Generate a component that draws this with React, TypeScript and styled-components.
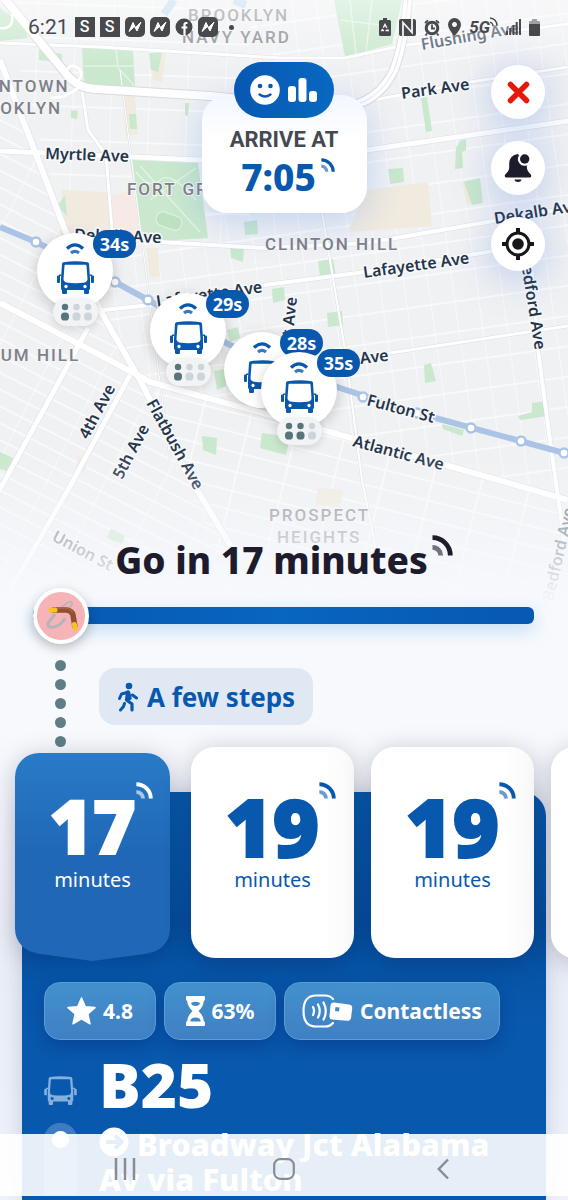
import React from "react";
import styled, { createGlobalStyle, css } from "styled-components";

const blue = "#0858ae";
const ink = "#1d1b2c";
const sans = `"Noto Sans", "Open Sans", sans-serif`;

const GlobalStyle = createGlobalStyle`
  *, *::before, *::after { box-sizing: border-box; }
  body { margin: 0; background: #f7f9fd; font-family: ${sans}; color: ${ink}; }
  button { font: inherit; color: inherit; border: 0; padding: 0; margin: 0; background: none; cursor: pointer; }
  h1, h2, p { margin: 0; }
  svg { display: block; flex: none; }
`;

/* ---------- layout ---------- */

const Page = styled.div`
  display: grid;
  grid-template-columns: minmax(0, 1fr);
  min-height: 100vh;
  overflow: hidden;
  background: linear-gradient(#f7f9fd 0 730px, #e9edf7 960px, #eef2fa);
`;

const MapCanvas = styled.div`
  grid-area: 1 / 1;
  position: relative;
  height: 620px;
`;

const MapDrawing = styled.svg`
  width: 100%;
  height: 100%;
`;

const Content = styled.div`
  grid-area: 1 / 1;
  position: relative;
  display: flex;
  flex-direction: column;
  pointer-events: none;
  & button { pointer-events: auto; }
`;

const Top = styled.div`
  min-height: 530px;
`;

const StatusBar = styled.div`
  display: flex;
  justify-content: space-between;
  align-items: center;
  height: 54px;
  padding: 0 28px;
  color: #47494c;
`;

const StatusGroup = styled.div<{ $gap: number }>`
  display: flex;
  align-items: center;
  gap: ${(p) => p.$gap}px;
`;

const Clock = styled.span`
  font: 400 21px/24px Roboto, sans-serif;
  margin-right: 1px;
`;

const AppTile = styled.span`
  display: grid;
  place-items: center;
  width: 20px;
  height: 20px;
  background: #47494c;
  color: #fff;
  font: 500 16px/20px Roboto, sans-serif;
`;

const MoreDot = styled.span`
  width: 5px;
  height: 5px;
  margin-left: 6px;
  border-radius: 50%;
  background: #47494c;
`;

const Network = styled.span`
  display: flex;
  font: italic 700 17px/20px Roboto, sans-serif;
`;

const Header = styled.header`
  display: grid;
  grid-template-columns: 1fr auto 1fr;
  align-items: start;
  padding: 8px 23px 0;
`;

const ArriveBox = styled.div`
  grid-column: 2;
  display: flex;
  flex-direction: column;
  align-items: center;
`;

const MoodButton = styled.button`
  position: relative;
  z-index: 1;
  display: flex;
  align-items: center;
  justify-content: center;
  gap: 8px;
  width: 100px;
  height: 56px;
  border-radius: 28px;
  background: linear-gradient(90deg, #0758b2, #0868c0);
`;

const ArriveCard = styled.div`
  width: 165px;
  height: 118px;
  margin-top: -23px;
  padding-top: 30px;
  border-radius: 26px;
  text-align: center;
  background: linear-gradient(#f2f7ff, #fff 40%);
  box-shadow: 0 8px 36px rgba(70, 130, 230, 0.28);
`;

const ArriveLabel = styled.p`
  font: 700 22px/30px Roboto, sans-serif;
  color: #454951;
`;

const ArriveTime = styled.p`
  display: flex;
  justify-content: center;
  gap: 5px;
  padding-left: 8px;
  font-size: 37px;
  font-weight: 800;
  line-height: 44px;
  color: ${blue};
  & svg { margin-top: 3px; }
`;

const Actions = styled.div`
  display: flex;
  flex-direction: column;
  align-items: flex-end;
  gap: 22px;
  padding-top: 3px;
`;

const RoundButton = styled.button`
  display: grid;
  place-items: center;
  width: 54px;
  height: 54px;
  border-radius: 50%;
  background: #fff;
  box-shadow: 0 6px 40px rgba(70, 120, 220, 0.38);
`;

/* ---------- bus pins ---------- */

const Pin = styled.button`
  position: absolute;
  display: flex;
  flex-direction: column;
  align-items: center;
  width: 76px;
  height: 76px;
  padding-top: 10px;
  transform: translate(-50%, -50%);
  border-radius: 50%;
  background: #fff;
  box-shadow: 0 3px 14px rgba(0, 0, 0, 0.2);
  color: ${blue};
  gap: 6px;
`;

const PinTime = styled.span`
  position: absolute;
  left: 56px;
  top: -3px;
  min-width: 43px;
  height: 28px;
  border-radius: 14px;
  background: ${blue};
  color: #fff;
  font-size: 18px;
  font-weight: 700;
  line-height: 28px;
  text-align: center;
`;

const Occupancy = styled.span`
  position: absolute;
  left: 16px;
  top: 65px;
  display: grid;
  place-items: center;
  width: 45px;
  height: 28px;
  border-radius: 14px;
  background: #f1f3f5;
  box-shadow: 0 3px 8px rgba(0, 0, 0, 0.12);
`;

/* ---------- trip ---------- */

const Title = styled.h1`
  display: flex;
  justify-content: center;
  gap: 4px;
  font-size: 37px;
  font-weight: 800;
  line-height: 60px;
  white-space: nowrap;
  & svg { margin-top: 5px; }
`;

const Progress = styled.div`
  display: flex;
  align-items: center;
  height: 17px;
  margin: 17px 34px 0 33px;
  border-radius: 6px;
  background: linear-gradient(90deg, #0758b0, #0865c0 50%, #0758b0);
  box-shadow: 0 6px 18px rgba(90, 170, 230, 0.35);
`;

const Avatar = styled.span`
  display: grid;
  place-items: center;
  width: 56px;
  height: 56px;
  border: 4px solid #fff;
  border-radius: 50%;
  background: #f6b3b8;
  box-shadow: 0 4px 12px rgba(0, 0, 0, 0.25);
`;

const WalkRow = styled.div`
  display: flex;
  gap: 33px;
  padding: 36px 55px 0;
`;

const Dots = styled.div`
  display: flex;
  flex-direction: column;
  gap: 8px;
`;

const Dot = styled.span`
  width: 11px;
  height: 11px;
  border-radius: 50%;
  background: #607d85;
`;

const WalkChip = styled.div`
  display: flex;
  align-items: center;
  gap: 8px;
  height: 57px;
  margin-top: 8px;
  padding: 0 18px;
  border-radius: 16px;
  background: #e0e9f3;
  color: ${blue};
  font-size: 26px;
  font-weight: 700;
  white-space: nowrap;
`;

const Departures = styled.div`
  position: relative;
  z-index: 1;
  display: flex;
  align-items: flex-start;
  gap: 17px;
  padding-left: 15px;
`;

const Departure = styled.button<{ $active?: boolean }>`
  position: relative;
  flex: none;
  display: flex;
  flex-direction: column;
  align-items: center;
  width: 163px;
  height: 211px;
  padding-top: 43px;
  border-radius: 24px;
  color: ${blue};
  background: linear-gradient(90deg, #fff 80%, #f9f9fa);
  box-shadow: 0 4px 26px rgba(0, 10, 40, 0.22);
  ${(p) =>
    p.$active &&
    css`
      width: 155px;
      height: 200px;
      margin: 6px 4px 0 0;
      padding-top: 37px;
      color: #fff;
      background: linear-gradient(#297bc7, #2068b7 50%);
      &::after {
        content: "";
        position: absolute;
        left: 18px;
        right: 18px;
        top: 100%;
        height: 8px;
        background: #2068b7;
        clip-path: polygon(0 0, 100% 0, 50% 100%);
      }
    `}
`;

const Minutes = styled.span<{ $active?: boolean }>`
  position: relative;
  font-size: ${(p) => (p.$active ? 74 : 80)}px;
  font-weight: 900;
  line-height: 72px;
  -webkit-text-stroke: 2px currentColor;
  & svg {
    position: absolute;
    left: 100%;
    top: -8px;
  }
`;

const Unit = styled.span`
  font-size: 20px;
  line-height: 36px;
`;

const Panel = styled.section`
  flex: 1;
  margin: -166px 22px 0;
  padding: 190px 22px 0;
  border-radius: 24px 24px 0 0;
  background: linear-gradient(#085aac, #06509f 130px, #0858ae 230px);
  box-shadow: 0 0 20px rgba(40, 60, 100, 0.2);
  color: #fff;
`;

const Chips = styled.div`
  display: flex;
  gap: 8px;
`;

const Chip = styled.button`
  display: flex;
  align-items: center;
  justify-content: center;
  gap: 7px;
  min-width: 112px;
  height: 58px;
  padding: 0 17px;
  border: 1px solid #5c9dd5;
  border-radius: 16px;
  background: linear-gradient(#4390cd, #3f80c4);
  box-shadow: 0 6px 16px rgba(0, 20, 80, 0.25);
  color: #fff;
  font-size: 21px;
  font-weight: 700;
`;

const LineRow = styled.div`
  display: grid;
  grid-template-columns: 33px 1fr;
  column-gap: 22px;
  align-items: center;
`;

const LineIcon = styled.span`
  padding-top: 18px;
  color: #85afdd;
`;

const LineName = styled.h2`
  font-size: 62px;
  font-weight: 900;
  line-height: 78px;
  padding-top: 5px;
`;

const StopRow = styled(LineRow)`
  align-items: start;
`;

const Track = styled.span`
  height: 72px;
  padding: 8px;
  border-radius: 16px 16px 0 0;
  background: rgba(255, 255, 255, 0.22);
`;

const TrackDot = styled.span`
  display: block;
  width: 17px;
  height: 17px;
  border-radius: 50%;
  background: #fff;
`;

const Headsign = styled.p`
  display: flex;
  gap: 8px;
  padding-top: 4px;
  font-size: 31px;
  font-weight: 800;
  line-height: 35px;
`;

const HeadsignText = styled.span`
  text-indent: 38px;
  margin-left: -38px;
  max-width: 420px;
`;

const SystemNav = styled.nav`
  position: fixed;
  z-index: 3;
  left: 0;
  right: 0;
  bottom: 4px;
  display: grid;
  grid-template-columns: repeat(3, 28%);
  justify-content: center;
  height: 62px;
  background: rgba(255, 255, 255, 0.9);
  color: #878d93;
`;

const NavButton = styled.button`
  display: grid;
  place-items: center;
  padding-top: 8px;
`;

/* ---------- icons ---------- */

const Bus = ({ size = 37 }: { size?: number }) => (
  <svg width={size} height={Math.round((size * 33) / 37)} viewBox="0 0 37 33" fill="currentColor" aria-hidden>
    <path
      fillRule="evenodd"
      d="M6.500 1.200Q18.500-.8 30.500 1.200Q31.800 1.500 32 2.800L33 18V27.500Q33 29 31.500 29H5.500Q4 29 4 27.500V18L5 2.800Q5.200 1.500 6.500 1.200ZM8.500 3.800Q7.600 3.900 7.500 4.800L6.500 18Q6.400 21 9 21.500Q18.500 23 28 21.500Q30.600 21 30.500 18L29.500 4.800Q29.400 3.900 28.500 3.800ZM9 23.800a1.700 1.700 0 1 0 .01 0ZM28 23.800a1.700 1.700 0 1 0 .01 0Z"
    />
    <rect x="5" y="28" width="5" height="5" rx="1.200" />
    <rect x="27" y="28" width="5" height="5" rx="1.200" />
    <path d="M4.500 13.500H2V14.500H1Q0 14.500 0 15.500V21Q0 22 1 22H2Q3 22 3 21V15H4.500ZM32.500 13.500H35V14.500H36Q37 14.500 37 15.500V21Q37 22 36 22H35Q34 22 34 21V15H32.500Z" />
  </svg>
);

const Live = ({ size }: { size: number }) => (
  <svg width={size} height={size} viewBox="0 0 21 21" fill="none" stroke="currentColor" strokeWidth="4.800" aria-hidden>
    <path d="M.5 2.700A17.800 17.800 0 0 1 18.300 20.500" />
    <path d="M.5 12.300A8.200 8.200 0 0 1 8.700 20.500" opacity=".6" />
  </svg>
);

const PinSignal = () => (
  <svg width="18" height="12" viewBox="0 0 18 12" fill="none" stroke="currentColor" strokeWidth="3.200" aria-hidden>
    <path d="M1 5.500Q9-1.800 17 5.500" />
    <path d="M5 10Q9 6.600 13 10" opacity=".8" />
  </svg>
);

const People = ({ full }: { full: number }) => (
  <svg width="32" height="19" viewBox="0 0 32 19" aria-hidden>
    {[0, 1, 2].map((i) => (
      <g key={i} fill={i < full ? "#58757c" : "#ccd5da"}>
        <circle cx={5 + i * 11.500} cy="4" r="3.200" />
        <rect x={1 + i * 11.500} y="9.500" width="8" height="8" rx="3.600" />
      </g>
    ))}
  </svg>
);

const Smile = () => (
  <svg width="30" height="30" viewBox="0 0 30 30" aria-hidden>
    <circle cx="15" cy="15" r="14.800" fill="#fff" />
    <circle cx="10" cy="11" r="2.300" fill={blue} />
    <circle cx="20.500" cy="11" r="2.300" fill={blue} />
    <path d="M9.500 19.500Q15 23.500 20.500 19.500" fill="none" stroke={blue} strokeWidth="2.400" strokeLinecap="round" />
  </svg>
);

const Bars = () => (
  <svg width="30" height="24" viewBox="0 0 30 24" fill="#fff" aria-hidden>
    <rect x="0" y="8" width="8" height="16" rx="3" />
    <rect x="10.500" y="0" width="8" height="24" rx="3" />
    <rect x="21" y="13" width="8" height="11" rx="3" />
  </svg>
);

const Cross = () => (
  <svg width="23" height="23" viewBox="0 0 23 23" stroke="#e5190b" strokeWidth="5.500" strokeLinecap="round" aria-hidden>
    <path d="M3.500 3.500L19.500 19.500M19.500 3.500L3.500 19.500" />
  </svg>
);

const Bell = () => (
  <svg width="28" height="30" viewBox="0 0 28 30" fill="#1b1d2a" aria-hidden>
    <path d="M14 1Q5.500 2 5.200 10.500V15Q5 18 1.200 21.500Q0 24 2 24.500H26Q28 24 26.800 21.500Q23 18 22.800 14L22.800 12.300A6.600 6.600 0 0 1 15 2.500Z" />
    <circle cx="20.700" cy="6" r="4.700" />
    <path d="M10.500 26.500H17.500Q17 29 14 29Q11 29 10.500 26.500Z" />
  </svg>
);

const Locate = () => (
  <svg width="34" height="34" viewBox="0 0 34 34" fill="none" stroke="#15171c" aria-hidden>
    <circle cx="17" cy="17" r="11" strokeWidth="3" />
    <path d="M17 1V7M17 27V33M1 17H7M27 17H33" strokeWidth="4" />
    <circle cx="17" cy="17" r="5.800" fill="#15171c" stroke="none" />
  </svg>
);

const Boomerang = () => (
  <svg width="40" height="40" viewBox="0 0 40 40" fill="none" aria-hidden>
    <path d="M20 12Q30 3 31 7Q31 10 28 12" stroke="#b3b4ba" strokeWidth="2" opacity=".8" />
    <path d="M14 18L7 27Q6 32 13 31Q21 29 24 22" stroke="#a5b6ba" strokeWidth="3" opacity=".85" />
    <path d="M11 14H26Q31 15 32 19L34 31" stroke="#8f4f33" strokeWidth="5.500" />
    <path d="M14 12.500H26Q30 13 31.500 17" stroke="#a9603f" strokeWidth="1.500" />
    <path d="M10 14H14M33.400 28.500L34.200 32" stroke="#fcc21b" strokeWidth="5" strokeLinecap="round" />
  </svg>
);

const Walker = () => (
  <svg width="22" height="30" viewBox="0 0 22 30" fill="none" stroke="currentColor" strokeLinecap="round" strokeLinejoin="round" aria-hidden>
    <circle cx="12" cy="4" r="3.300" fill="currentColor" stroke="none" />
    <path d="M10.500 10.500L9.500 18L15 22V28" strokeWidth="3.200" />
    <path d="M11 10.500L12.500 16" strokeWidth="4.500" />
    <path d="M10 10.500L4.500 12L2.500 16.500M15.500 13L19.500 16M7.500 21.500L6.500 24.500L3.500 28" strokeWidth="3" />
  </svg>
);

const Star = () => (
  <svg width="29" height="28" viewBox="0 0 29 28" fill="#fff" stroke="#fff" strokeWidth="1.500" strokeLinejoin="round" aria-hidden>
    <path d="M14.500 1L18.400 9.700L28 10.600L20.800 17L23 26.800L14.500 21.800L6 26.800L8.200 17L1 10.600L10.600 9.700Z" />
  </svg>
);

const Hourglass = () => (
  <svg width="19" height="30" viewBox="0 0 19 30" fill="#fff" aria-hidden>
    <path
      fillRule="evenodd"
      d="M1 0H18Q19 0 19 1V3Q19 4.500 17.800 5Q17.500 10.500 12.500 15Q17.500 19.500 17.800 25Q19 25.500 19 27V29Q19 30 18 30H1Q0 30 0 29V27Q0 25.500 1.200 25Q1.500 19.500 6.500 15Q1.500 10.500 1.200 5Q0 4.500 0 3V1Q0 0 1 0ZM5 7Q9.500 4.500 14 7Q13.700 8.200 13 9Q9.500 11 6 9Q5.300 8.200 5 7ZM4.200 25.500H14.800Q14.300 21.500 9.500 21.500Q4.700 21.500 4.200 25.500Z"
    />
  </svg>
);

const Contactless = () => (
  <svg width="51" height="34" viewBox="0 0 51 34" fill="none" stroke="#fff" strokeLinecap="round" aria-hidden>
    <path d="M31 5Q28 1.500 23 1.500H14Q1.500 1.500 1.500 17T14 32.500H23Q28 32.500 31 29" strokeWidth="2.200" />
    <path d="M11 13Q13 17 11 21M16 10.500Q19.500 17 16 23.500M21.500 8.500Q26 17 21.500 25.500" strokeWidth="2.200" />
    <path
      fill="#fff"
      stroke="none"
      fillRule="evenodd"
      d="M32 8.500L47 10.500Q50.500 11 50.200 14.500L49 24Q48.500 27 45 26.800L30 25.500Q27 25 27.500 21.500L28.500 11.500Q29 8.200 32 8.500ZM33.500 13L33 17L37 17.500L37.500 13.500Z"
    />
  </svg>
);

const ArrowBadge = () => (
  <svg width="30" height="30" viewBox="0 0 30 30" aria-hidden>
    <circle cx="15" cy="15" r="14.500" fill="#fff" />
    <path d="M7 15H22M16 8.500L22.500 15L16 21.500" fill="none" stroke={blue} strokeWidth="4" />
  </svg>
);

const Messenger = () => (
  <svg width="20" height="20" viewBox="0 0 20 20" aria-hidden>
    <rect width="20" height="20" rx="5" fill="#47494c" />
    <path d="M4 14.500L8 5.500L10.500 10.500L16 5L12 14L9.500 9.500Z" fill="#fff" stroke="#fff" strokeWidth="1" strokeLinejoin="round" />
  </svg>
);

const Facebook = () => (
  <svg width="18" height="18" viewBox="0 0 18 18" aria-hidden>
    <circle cx="9" cy="9" r="8.500" fill="#47494c" />
    <path d="M12.500 5H11Q9.500 5 9.500 6.700V18M6.500 9.500H12.300" fill="none" stroke="#fff" strokeWidth="2.200" />
  </svg>
);

const StatusIcons = () => (
  <>
    <svg width="12" height="18" viewBox="0 0 12 18" aria-hidden>
      <path d="M4 0H8V2H10.500Q12 2 12 3.500V16.500Q12 18 10.500 18H1.500Q0 18 0 16.500V3.500Q0 2 1.500 2H4Z" fill="#47494c" />
      <path d="M6 6.500L9.200 12.500H2.800Z" fill="none" stroke="#fff" strokeWidth="1.300" strokeDasharray="4 1.500" />
    </svg>
    <svg width="17" height="17" viewBox="0 0 17 17" aria-hidden>
      <path d="M2 0H15Q17 0 17 2V15Q17 17 15 17H2Q0 17 0 15V2Q0 0 2 0Z" fill="#47494c" />
      <path d="M4 17V3.500L13 13.500V0" fill="none" stroke="#f2f3f5" strokeWidth="1.800" />
    </svg>
    <svg width="16" height="17" viewBox="0 0 16 17" fill="none" stroke="#47494c" aria-hidden>
      <circle cx="8" cy="9" r="5.800" strokeWidth="3" />
      <path d="M8 5.500V9.500H11M1 4L4 1.300M15 4L12 1.300M3 14.500L1.500 16.500M13 14.500L14.500 16.500" strokeWidth="1.800" />
    </svg>
    <svg width="13" height="18" viewBox="0 0 13 18" aria-hidden>
      <path fillRule="evenodd" fill="#47494c" d="M6.500 0A6.500 6.500 0 0 1 13 6.500Q13 11 6.500 18Q0 11 0 6.500A6.500 6.500 0 0 1 6.500 0ZM6.500 4a2.500 2.500 0 1 0 .01 0Z" />
    </svg>
    <Network>
      5G
      <svg width="8" height="10" viewBox="0 0 8 10" fill="none" stroke="#47494c" strokeWidth="1.300" aria-hidden>
        <path d="M0 1Q7 2 7 9M0 5Q3 6 3 9" />
      </svg>
    </Network>
    <svg width="15" height="16" viewBox="0 0 15 16" stroke="#47494c" strokeWidth="2" aria-hidden>
      <path d="M1 16V12M4.200 16V9M7.500 16V6M10.700 16V3M14 16V0" />
    </svg>
    <svg width="11" height="17" viewBox="0 0 11 17" fill="#47494c" aria-hidden>
      <path d="M3 0H8V2H10Q11 2 11 3V5H0V3Q0 2 1 2H3Z" opacity=".5" />
      <path d="M0 5H11V16Q11 17 10 17H1Q0 17 0 16Z" />
    </svg>
  </>
);

/* ---------- map ---------- */

const parks = [
  "82,47 133,51 135,86 84,85",
  "130,160 198,163 208,238 142,242",
  "334,0 402,0 392,44 345,57",
  "0,8 22,24 28,38 0,41",
  "39,50 62,54 62,62 39,60",
  "149,53 162,53 158,72 151,70",
  "71,110 78,111 77,119 71,118",
  "129,114 136,114 137,129 130,129",
  "185,103 189,103 188,116 185,115",
  "421,98 427,97 432,131 426,132",
  "388,169 403,168 404,182 390,184",
  "460,141 466,139 466,150 462,152 463,168 455,169 456,148",
  "464,182 480,178 483,203 472,205",
  "62,200 65,195 67,216 57,205",
  "230,248 244,249 243,262 231,258",
  "318,261 333,259 336,275 320,277",
  "272,289 284,287 285,300 273,303",
  "327,313 342,311 343,325 328,327",
  "424,365 431,363 436,381 425,383",
  "518,416 532,412 532,403 545,401 548,416 520,420",
  "442,424 464,430 462,436 443,429",
  "262,433 290,437 286,455 260,448",
  "202,436 217,438 216,455 203,450",
  "214,371 225,369 226,386 217,390",
  "227,330 238,327 240,338 230,342",
  "244,222 257,220 258,234 245,235",
  "0,452 13,458 9,472 0,469",
  "111,529 125,536 122,544 107,538",
];

const sand = [
  "62,190 108,192 112,238 60,240",
  "122,88 134,88 138,134 126,136",
  "154,52 166,53 162,82 152,80",
  "366,190 428,182 432,226 348,232",
  "462,182 470,180 474,203 466,204",
  "146,248 158,248 160,276 150,278",
  "318,488 343,490 340,507 315,505",
  "78,456 88,460 84,472 76,468",
];

const roads: [string, number][] = [
  ["M0 60L65 230L100 310L140 380L185 470L232 548", 6],
  ["M0 151L200 160L367 150L568 121", 5],
  ["M0 43L100 47L280 58H345L400 46L568 24", 3],
  ["M363 102L470 82L568 67", 3],
  ["M142 241L265 248L367 243L568 208", 4],
  ["M66 314L150 305L265 285L365 272L500 250", 4],
  ["M265 372L390 353L568 326", 3],
  ["M0 303L100 355L150 382L200 396L270 415L330 432L568 500", 6],
  ["M88 328L38 420L-6 500M130 375L68 490L10 590", 5],
  ["M82 90L88 130L106 155L112 230", 3],
  ["M528 225L538 350L550 440L564 540", 4],
  ["M320 200L345 350L362 480L378 560", 2],
  ["M258 0L262 50M120 70L170 460", 1],
];

const stops = [
  [36, 242], [115, 282], [148, 300], [363, 397], [417, 413], [471, 428], [521, 441], [564, 453],
];

const streets: { x: number; y: number; turn: number; text: string; fade?: number }[] = [
  { x: 45, y: 159, turn: 2, text: "Myrtle Ave" },
  { x: 402, y: 99, turn: -8, text: "Park Ave" },
  { x: 422, y: 50, turn: -10, text: "Flushing Ave", fade: 0.8 },
  { x: 74, y: 240, turn: 2, text: "Dekalb Ave" },
  { x: 495, y: 224, turn: -9, text: "Dekalb Ave" },
  { x: 157, y: 307, turn: -8, text: "Lafayette Ave" },
  { x: 364, y: 278, turn: -8, text: "Lafayette Ave" },
  { x: 312, y: 370, turn: -7, text: "Gates Ave" },
  { x: 366, y: 405, turn: 15, text: "Fulton St" },
  { x: 352, y: 446, turn: 15, text: "Atlantic Ave" },
  { x: 88, y: 440, turn: -62, text: "4th Ave" },
  { x: 122, y: 480, turn: -62, text: "5th Ave" },
  { x: 146, y: 403, turn: 61, text: "Flatbush Ave" },
  { x: 51, y: 540, turn: 28, text: "Union St", fade: 0.6 },
  { x: 520, y: 256, turn: 81, text: "Bedford Ave" },
  { x: 553, y: 602, turn: -77, text: "Bedford Ave", fade: 0.65 },
  { x: 285, y: 411, turn: -84, text: "Vanderbilt Ave" },
];

const districts: { x: number; y: number; text: string; fade?: number }[] = [
  { x: 188, y: 21, text: "BROOKLYN", fade: 0.8 },
  { x: 182, y: 43, text: "NAVY YARD", fade: 0.9 },
  { x: -45, y: 92, text: "DOWNTOWN" },
  { x: -39, y: 114, text: "BROOKLYN" },
  { x: 127, y: 195, text: "FORT GREENE" },
  { x: 265, y: 250, text: "CLINTON HILL" },
  { x: -50, y: 361, text: "BOERUM HILL" },
  { x: 269, y: 521, text: "PROSPECT", fade: 0.8 },
  { x: 277, y: 543, text: "HEIGHTS", fade: 0.7 },
];

const StreetLabel = styled.text`
  font: 600 16px ${sans};
  fill: #25354a;
  stroke: #f7f8fa;
  stroke-width: 3px;
  paint-order: stroke;
`;

const DistrictLabel = styled.text`
  font: 500 17px Roboto, sans-serif;
  letter-spacing: 2px;
  fill: #7d8088;
  stroke: #f4f5f7;
  stroke-width: 2px;
  paint-order: stroke;
`;

const CityMap = () => (
  <MapDrawing viewBox="0 0 568 620" preserveAspectRatio="xMidYMin slice" role="img" aria-label="Map of Brooklyn">
    <defs>
      <pattern id="north" width="24" height="30" patternUnits="userSpaceOnUse" patternTransform="rotate(-8)">
        <path d="M0 0V30M0 2H24" stroke="#fbfcfd" strokeWidth="1.500" fill="none" />
      </pattern>
      <pattern id="west" width="38" height="34" patternUnits="userSpaceOnUse" patternTransform="rotate(2)">
        <path d="M0 0V34M0 2H38" stroke="#fbfcfd" strokeWidth="1.500" fill="none" />
      </pattern>
      <pattern id="slope" width="52" height="15" patternUnits="userSpaceOnUse" patternTransform="rotate(27)">
        <path d="M0 0V15M0 2H52" stroke="#fbfcfd" strokeWidth="1.500" fill="none" />
      </pattern>
      <pattern id="south" width="48" height="19" patternUnits="userSpaceOnUse" patternTransform="rotate(14)">
        <path d="M8 0V19M0 2H48" stroke="#fbfcfd" strokeWidth="1.500" fill="none" />
      </pattern>
      <linearGradient id="fade" x1="0" y1="0" x2="0" y2="1">
        <stop offset="0" stopColor="#f7f9fd" stopOpacity="0" />
        <stop offset=".5" stopColor="#f7f9fd" stopOpacity=".5" />
        <stop offset=".85" stopColor="#f7f9fd" stopOpacity=".95" />
        <stop offset="1" stopColor="#f7f9fd" />
      </linearGradient>
      <linearGradient id="haze" x1="0" y1="0" x2="0" y2="1">
        <stop offset="0" stopColor="#fff" stopOpacity=".5" />
        <stop offset="1" stopColor="#fff" stopOpacity="0" />
      </linearGradient>
    </defs>
    <rect width="568" height="620" fill="#f0f1f3" />
    <path d="M0 0H250V245H70Z" fill="url(#west)" />
    <path d="M250 0H568V495L200 396L140 378L70 240L160 165L250 160Z" fill="url(#north)" />
    <path d="M0 60L70 240L140 380L232 548V620H0Z" fill="url(#slope)" />
    <path d="M150 382L200 396L568 498V620H240Z" fill="url(#south)" />
    {sand.map((points) => (
      <polygon key={points} points={points} fill="#f1ebdf" />
    ))}
    <polygon points="112,196 133,190 141,240 114,240" fill="#f6e9e6" />
    {parks.map((points) => (
      <polygon key={points} points={points} fill="#c9e8cd" />
    ))}
    <path
      d="M84 66H134M116 48L118 68L134 85M340 20L390 26M350 0L356 54M372 0L366 52M136 172Q150 190 160 180T196 200M140 166L200 232M150 200L196 168"
      stroke="#e3f3e4"
      fill="none"
      strokeWidth="1.500"
    />
    <rect x="156" y="214" width="26" height="14" rx="6" fill="#bde2c1" stroke="#e3f3e4" transform="rotate(20 169 221)" />
    <path d="M174 0L164 14M234 0L246 5" stroke="#c3dcf1" strokeWidth="8" />
    {roads.map(([d, width]) => (
      <path key={d} d={d} fill="none" stroke="#dcdee2" strokeWidth={width + 1} />
    ))}
    {roads.map(([d, width]) => (
      <path key={d} d={d} fill="none" stroke="#fff" strokeWidth={width} />
    ))}
    <g fill="none">
      <path d="M4 -2L68 76Q78 88 96 89L210 96L340 108Q378 104 394 70Q404 44 408 -2" stroke="#d9dbdf" strokeWidth="10" />
      <path d="M4 -2L68 76Q78 88 96 89L210 96L340 108Q378 104 394 70Q404 44 408 -2" stroke="#fff" strokeWidth="8" />
      <path d="M340 108Q378 104 394 70Q404 44 408 -2" stroke="#e4e6ea" />
      <path d="M0 28Q14 30 12 14M50 98Q66 98 78 88M66 72Q70 62 78 68T74 86" stroke="#fff" strokeWidth="2.500" />
    </g>
    <path d="M0 227L36 242L115 282L148 300L230 345L340 388L417 413L568 454" fill="none" stroke="#abc4e6" strokeWidth="6" />
    {stops.map(([cx, cy]) => (
      <circle key={cx} cx={cx} cy={cy} r="4.500" fill="#fff" stroke="#abc4e6" strokeWidth="2.500" />
    ))}
    {districts.map((d) => (
      <DistrictLabel key={d.text + d.y} x={d.x} y={d.y} opacity={d.fade}>
        {d.text}
      </DistrictLabel>
    ))}
    {streets.map((s) => (
      <StreetLabel key={s.text + s.x} transform={`translate(${s.x} ${s.y}) rotate(${s.turn})`} opacity={s.fade}>
        {s.text}
      </StreetLabel>
    ))}
    <rect width="568" height="70" fill="url(#haze)" />
    <rect y="450" width="568" height="170" fill="url(#fade)" />
  </MapDrawing>
);

/* ---------- data ---------- */

const buses = [
  { x: 75, y: 271, eta: "34s", full: 1 },
  { x: 188, y: 331, eta: "29s", full: 1 },
  { x: 262, y: 370, eta: "28s", full: 0 },
  { x: 299, y: 390, eta: "35s", full: 2 },
];

const departures = [17, 19, 19, 27];

export default function App() {
  return (
    <>
      <GlobalStyle />
      <Page>
        <MapCanvas>
          <CityMap />
          {buses.map((bus) => (
            <Pin
              key={bus.eta}
              aria-label={`Bus, updated ${bus.eta} ago`}
              style={{ left: `${(bus.x / 568) * 100}%`, top: bus.y }}
            >
              <PinSignal />
              <Bus />
              <PinTime>{bus.eta}</PinTime>
              {bus.full > 0 && (
                <Occupancy>
                  <People full={bus.full} />
                </Occupancy>
              )}
            </Pin>
          ))}
        </MapCanvas>

        <Content>
          <Top>
            <StatusBar>
              <StatusGroup $gap={5}>
                <Clock>6:21</Clock>
                <AppTile>S</AppTile>
                <AppTile>S</AppTile>
                <Messenger />
                <Messenger />
                <Facebook />
                <Messenger />
                <MoreDot />
              </StatusGroup>
              <StatusGroup $gap={8}>
                <StatusIcons />
              </StatusGroup>
            </StatusBar>
            <Header>
              <ArriveBox>
                <MoodButton aria-label="Rate this trip">
                  <Smile />
                  <Bars />
                </MoodButton>
                <ArriveCard>
                  <ArriveLabel>ARRIVE AT</ArriveLabel>
                  <ArriveTime>
                    7:05
                    <Live size={14} />
                  </ArriveTime>
                </ArriveCard>
              </ArriveBox>
              <Actions>
                <RoundButton aria-label="Close">
                  <Cross />
                </RoundButton>
                <RoundButton aria-label="Alerts">
                  <Bell />
                </RoundButton>
                <RoundButton aria-label="Locate me">
                  <Locate />
                </RoundButton>
              </Actions>
            </Header>
          </Top>

          <Title>
            Go in 17 minutes
            <Live size={21} />
          </Title>

          <Progress>
            <Avatar>
              <Boomerang />
            </Avatar>
          </Progress>

          <WalkRow>
            <Dots>
              {[0, 1, 2, 3, 4].map((i) => (
                <Dot key={i} />
              ))}
            </Dots>
            <WalkChip>
              <Walker />
              A few steps
            </WalkChip>
          </WalkRow>

          <Departures>
            {departures.map((minutes, i) => (
              <Departure key={i} $active={i === 0}>
                <Minutes $active={i === 0}>
                  {minutes}
                  <Live size={17} />
                </Minutes>
                <Unit>minutes</Unit>
              </Departure>
            ))}
          </Departures>

          <Panel>
            <Chips>
              <Chip>
                <Star />
                4.8
              </Chip>
              <Chip>
                <Hourglass />
                63%
              </Chip>
              <Chip>
                <Contactless />
                Contactless
              </Chip>
            </Chips>
            <LineRow>
              <LineIcon>
                <Bus size={33} />
              </LineIcon>
              <LineName>B25</LineName>
            </LineRow>
            <StopRow>
              <Track>
                <TrackDot />
              </Track>
              <Headsign>
                <ArrowBadge />
                <HeadsignText>Broadway Jct Alabama Av via Fulton</HeadsignText>
              </Headsign>
            </StopRow>
          </Panel>
        </Content>
      </Page>

      <SystemNav aria-label="System">
        <NavButton aria-label="Recent apps">
          <svg width="22" height="22" viewBox="0 0 22 22" stroke="currentColor" strokeWidth="2.500" aria-hidden>
            <path d="M2 0V22M11 0V22M20 0V22" />
          </svg>
        </NavButton>
        <NavButton aria-label="Home">
          <svg width="22" height="22" viewBox="0 0 22 22" fill="none" stroke="currentColor" strokeWidth="2.200" aria-hidden>
            <rect x="1.200" y="1.200" width="19.600" height="19.600" rx="6" />
          </svg>
        </NavButton>
        <NavButton aria-label="Back">
          <svg width="12" height="22" viewBox="0 0 12 22" fill="none" stroke="currentColor" strokeWidth="2.400" aria-hidden>
            <path d="M11 1.500L1.800 11L11 20.500" />
          </svg>
        </NavButton>
      </SystemNav>
    </>
  );
}
